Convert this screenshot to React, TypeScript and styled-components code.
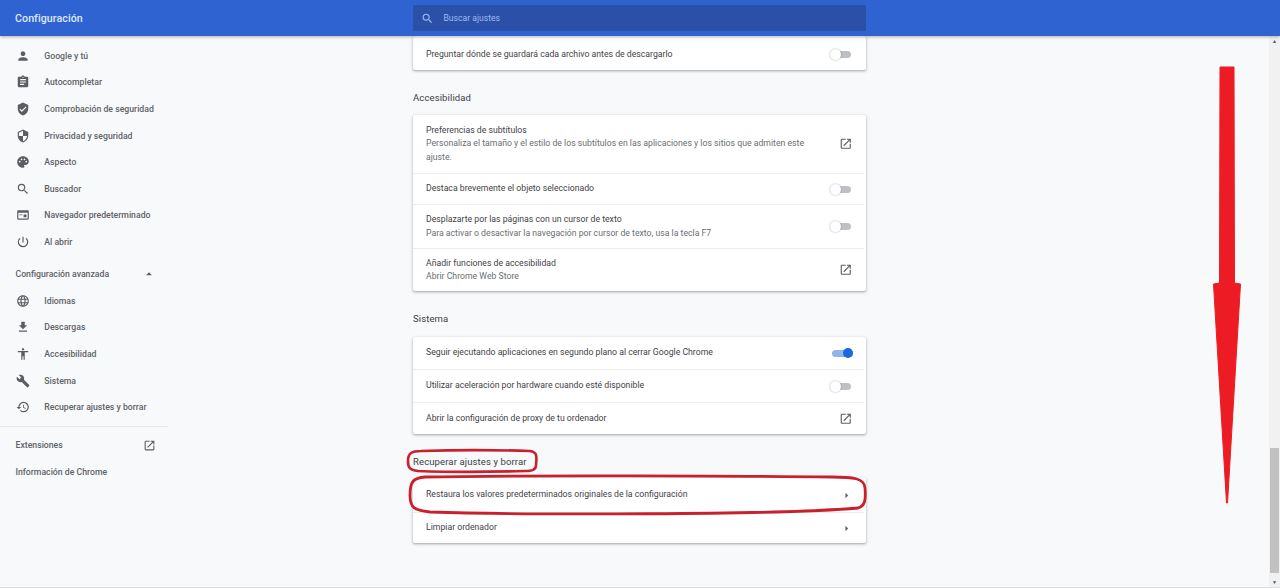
import React from "react";
import styled, { createGlobalStyle } from "styled-components";
import {
  MdPerson, MdAssignment, MdVerifiedUser, MdSecurity, MdPalette, MdSearch,
  MdPowerSettingsNew, MdLanguage, MdFileDownload, MdAccessibility, MdBuild, MdRestore,
  MdOpenInNew, MdArrowDropUp, MdArrowRight,
} from "react-icons/md";

const Global = createGlobalStyle`
  html, body { margin: 0; padding: 0; height: 100%; overflow: hidden; background: #f8f9fa; }
  * { box-sizing: border-box; }
  body { font-family: Roboto, "Liberation Sans", sans-serif; }
`;

const Page = styled.div`
  position: relative; width: 1280px; height: 588px; overflow: hidden;
  display: flex; flex-direction: column; background: #f8f9fa;
  border-bottom: 1px solid #dcdde0;
`;
const Header = styled.header`
  position: relative; z-index: 2; flex: none; height: 36px; background: #2f63d2;
  box-shadow: 0 1px 3px rgba(60,64,67,.4);
  display: flex; align-items: center;
`;
const Title = styled.h1`
  margin: 0; width: 413px; padding-left: 15px; color: #dfe8fa;
  font-size: 10.6px; font-weight: 500; letter-spacing: .1px;
`;
const Search = styled.div`
  width: 453px; height: 26px; background: #2a50a8; display: flex; align-items: center;
  color: #9dbcf2; font-size: 8.6px; border-radius: 1px;
  svg { margin: 0 10px 0 7.5px; font-size: 13px; }
`;
const Body = styled.div`
  flex: 1; min-height: 0; display: flex;
`;
const Sidebar = styled.nav`
  flex: none; width: 168px; padding-top: 6.3px; display: flex; flex-direction: column;
`;
const NavItem = styled.div`
  height: 26.65px; display: flex; align-items: center; padding-left: 15.5px;
  color: #5f6368; font-size: 8.7px; font-weight: 500; white-space: nowrap;
  svg { flex: none; font-size: 14px; margin-right: 14.8px; color: #5a5e63; }
`;
const NavHeading = styled.div`
  height: 26.65px; margin-top: 5.4px; display: flex; align-items: center; justify-content: space-between;
  padding: 0 12px 0 15.5px; color: #5f6368; font-size: 8.7px; font-weight: 500;
  svg { font-size: 14px; color: #5a5e63; }
`;
const NavDivider = styled.hr`
  margin: 5.5px 0 5px; border: 0; border-top: 1px solid #e6e7e9; width: 168px;
`;
const NavLink = styled.div`
  height: 26.65px; display: flex; align-items: center; justify-content: space-between;
  padding: 0 12.5px 0 15.5px; color: #5f6368; font-size: 8.7px; font-weight: 500;
  svg { font-size: 13px; color: #5a5e63; }
`;
const Main = styled.main`
  flex: none; width: 453px; margin-left: 245px;
`;
const Heading = styled.h2<{ $h: number }>`
  margin: 0; height: ${p => p.$h}px; padding-top: 20.5px; color: #3c4043;
  font-size: 9.5px; line-height: 13px; font-weight: 400; letter-spacing: .12px;
`;
const Card = styled.section`
  background: #fff; border-radius: 2px;
  box-shadow: 0 1px 2px rgba(60,64,67,.3), 0 1px 3px 1px rgba(60,64,67,.12);
`;
const Row = styled.div<{ $h: number; $line?: boolean; $top?: number }>`
  height: ${p => p.$h}px; display: flex; align-items: center; justify-content: space-between;
  padding: ${p => p.$top ?? 0}px 13px 0; margin: 0 2px 0 0;
  ${p => p.$line ? "border-top: 1px solid #eceded;" : ""}
  svg { flex: none; }
`;
const Text = styled.div`
  width: 386px; font-size: 8.7px; line-height: 13.3px; color: #3f4347;
`;
const Sub = styled.div`
  color: #6a6e73;
`;
const External = styled(MdOpenInNew)`
  font-size: 13.5px; color: #5a5e63; margin-right: -1px;
`;
const Caret = styled(MdArrowRight)`
  font-size: 13px; color: #5a5e63; margin-right: -2px;
`;
const Toggle = styled.div<{ $on?: boolean }>`
  position: relative; flex: none; width: 21px; height: 7px; border-radius: 4px;
  margin-right: ${p => (p.$on ? "-2px" : "0")};
  background: ${p => (p.$on ? "#8fb4ee" : "#bdc1c6")};
  &::after {
    content: ""; position: absolute; top: ${p => (p.$on ? "-1.5px" : "-2px")};
    width: ${p => (p.$on ? "10px" : "11px")}; height: ${p => (p.$on ? "10px" : "11px")}; border-radius: 50%;
    ${p => (p.$on ? "right: 0;" : "left: 0;")}
    background: ${p => (p.$on ? "#1a68db" : "#fff")};
    box-shadow: ${p => (p.$on ? "none" : "0 0 2px rgba(60,64,67,.45)")};
  }
`;
const Scrollbar = styled.div`
  position: absolute; top: 36px; right: 0; bottom: 0; width: 11px; background: #f1f1f1;
  display: flex; flex-direction: column; align-items: center; justify-content: space-between;
  color: #505050; font-size: 5px; line-height: 10px;
`;
const Thumb = styled.div`
  position: absolute; left: 1px; top: 412px; width: 9px; height: 125px; background: #c1c1c1;
`;
const Overlay = styled.svg`
  position: absolute; left: 0; top: 0; z-index: 3; pointer-events: none;
`;

const BrowserIcon = () => (
  <svg width="1em" height="1em" viewBox="0 0 24 24" fill="currentColor" fillRule="evenodd">
    <path d="M20 4H4c-1.1 0-2 .9-2 2v12c0 1.1.9 2 2 2h16c1.1 0 2-.9 2-2V6c0-1.1-.9-2-2-2zm0 14H4V8h16v10z M13 11h5v5h-5z M6 11h5v1.5H6z" />
  </svg>
);

const navTop: [React.ComponentType, string][] = [
  [MdPerson, "Google y tú"], [MdAssignment, "Autocompletar"], [MdVerifiedUser, "Comprobación de seguridad"],
  [MdSecurity, "Privacidad y seguridad"], [MdPalette, "Aspecto"], [MdSearch, "Buscador"],
  [BrowserIcon, "Navegador predeterminado"], [MdPowerSettingsNew, "Al abrir"],
];
const navAdv: [React.ComponentType, string][] = [
  [MdLanguage, "Idiomas"], [MdFileDownload, "Descargas"], [MdAccessibility, "Accesibilidad"],
  [MdBuild, "Sistema"], [MdRestore, "Recuperar ajustes y borrar"],
];

export default function App() {
  return (
    <Page>
      <Global />
      <Header>
        <Title>Configuración</Title>
        <Search><MdSearch />Buscar ajustes</Search>
      </Header>
      <Body>
        <Sidebar>
          {navTop.map(([I, t]) => <NavItem key={t}><I />{t}</NavItem>)}
          <NavHeading>Configuración avanzada<MdArrowDropUp /></NavHeading>
          {navAdv.map(([I, t]) => <NavItem key={t}><I />{t}</NavItem>)}
          <NavDivider />
          <NavLink>Extensiones<MdOpenInNew /></NavLink>
          <NavLink>Información de Chrome</NavLink>
        </Sidebar>
        <Main>
          <Card>
            <Row $h={34} $top={3}><Text>Preguntar dónde se guardará cada archivo antes de descargarlo</Text><Toggle /></Row>
          </Card>
          <Heading $h={45}>Accesibilidad</Heading>
          <Card>
            <Row $h={58}>
              <Text>Preferencias de subtítulos<Sub>Personaliza el tamaño y el estilo de los subtítulos en las aplicaciones y los sitios que admiten este ajuste.</Sub></Text>
              <External />
            </Row>
            <Row $h={31} $line><Text>Destaca brevemente el objeto seleccionado</Text><Toggle /></Row>
            <Row $h={44} $line>
              <Text>Desplazarte por las páginas con un cursor de texto<Sub>Para activar o desactivar la navegación por cursor de texto, usa la tecla F7</Sub></Text>
              <Toggle />
            </Row>
            <Row $h={43} $line>
              <Text>Añadir funciones de accesibilidad<Sub>Abrir Chrome Web Store</Sub></Text>
              <External />
            </Row>
          </Card>
          <Heading $h={46}>Sistema</Heading>
          <Card>
            <Row $h={32}><Text>Seguir ejecutando aplicaciones en segundo plano al cerrar Google Chrome</Text><Toggle $on /></Row>
            <Row $h={33} $line><Text>Utilizar aceleración por hardware cuando esté disponible</Text><Toggle /></Row>
            <Row $h={32} $line><Text>Abrir la configuración de proxy de tu ordenador</Text><External /></Row>
          </Card>
          <Heading $h={44}>Recuperar ajustes y borrar</Heading>
          <Card>
            <Row $h={34}><Text>Restaura los valores predeterminados originales de la configuración</Text><Caret /></Row>
            <Row $h={31} $line><Text>Limpiar ordenador</Text><Caret /></Row>
          </Card>
        </Main>
      </Body>
      <Scrollbar>
        <span>▲</span>
        <Thumb />
        <span>▼</span>
      </Scrollbar>
      <Overlay width="1280" height="588" viewBox="0 0 1280 588">
        <path d="M1220 67 L1234 67 L1234.5 283 L1240.5 284 L1227.5 503 L1226.5 503 L1213.5 284 L1219.5 283 Z" fill="#ed1c24" stroke="#ed1c24" strokeLinejoin="round" />
        <path d="M421 451 C450 450 500 450 530 451 C537 452 537 456 536 465 C536 470 532 471 525 471 C490 472 445 472 418 471 C409 470 408 467 408 461 C408 453 412 451 421 451 Z" fill="none" stroke="#c9202e" strokeWidth="2.6" />
        <path d="M425 477 C520 475 760 476 832 477 C852 477 865 478 865 488 C866 500 865 506 858 508 C780 515 520 515 430 512 C414 510 410 508 410 495 C410 482 413 478 425 477 Z" fill="none" stroke="#c9202e" strokeWidth="2.8" />
      </Overlay>
    </Page>
  );
}
